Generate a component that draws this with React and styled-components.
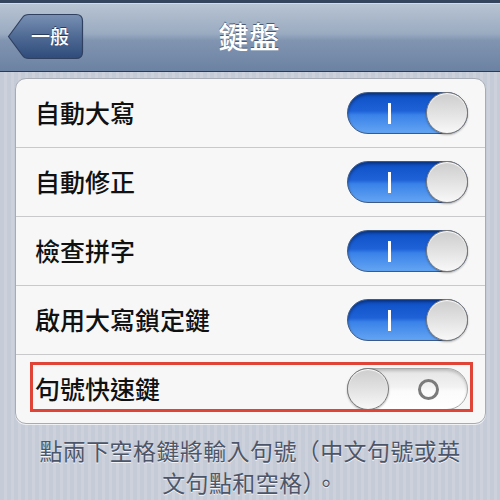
import React from "react";
import styled, { createGlobalStyle } from "styled-components";

const Global = createGlobalStyle`
  html, body { margin: 0; padding: 0; }
  body {
    width: 500px;
    height: 500px;
    overflow: hidden;
    font-family: "Noto Sans CJK TC", "Noto Sans", sans-serif;
    background-color: #c8cdd8;
    background-image: repeating-linear-gradient(90deg, #c5cbd7 0px, #c5cbd7 4px, #ccd1dc 4px, #ccd1dc 7px);
  }
`;

const Page = styled.div`
  width: 500px;
  height: 500px;
  display: flex;
  flex-direction: column;
`;

const NavBar = styled.header`
  box-sizing: border-box;
  height: 72px;
  border-top: 3px solid #34445f;
  border-bottom: 1px solid #2c3b54;
  background: linear-gradient(to bottom, #b9c4d3 0%, #9aabc1 45%, #8195b1 55%, #6c82a2 100%);
  box-shadow: inset 0 1px 0 #d3dbe5;
  display: grid;
  grid-template-columns: 1fr auto 1fr;
  align-items: center;
  padding: 0 8px 2px 7px;
`;

const BackButton = styled.button`
  justify-self: start;
  display: grid;
  width: 77px;
  height: 47px;
  padding: 0;
  border: 0;
  background: none;
  & > * { grid-area: 1 / 1; }
`;

const BackLabel = styled.span`
  align-self: center;
  justify-self: start;
  margin-left: 24px;
  margin-top: -2px;
  color: #fff;
  font-size: 19px;
  font-weight: 500;
  font-family: "Noto Sans CJK TC", sans-serif;
  text-shadow: 0 -1px 0 #2a3c5c;
`;

const Title = styled.h1`
  margin: 0 0 2px 0;
  color: #fff;
  font-size: 30px;
  font-weight: 500;
  letter-spacing: 1px;
  text-shadow: 0 -1px 0 #4a5a75;
`;

const Card = styled.section`
  margin: 6px 14px 0 15px;
  background: #f7f7f7;
  border: 1px solid #a7abb3;
  border-radius: 11px;
  box-shadow: 0 1px 0 rgba(255,255,255,0.7);
  display: flex;
  flex-direction: column;
  overflow: hidden;
`;

const Row = styled.div`
  position: relative;
  box-sizing: border-box;
  padding: 0 17px 0 19px;
  display: flex;
  align-items: center;
  justify-content: space-between;
  border-top: ${p => (p.$first ? "none" : "1px solid #c9c9cb")};
  height: ${p => (p.$first ? "68px" : "69px")};
`;

const Label = styled.span`
  font-size: 25px;
  font-weight: 500;
  line-height: 1;
  margin-top: -2px;
  color: #111;
`;

const Highlight = styled.div`
  position: absolute;
  left: 14px;
  right: 12px;
  top: 7px;
  height: 50px;
  box-sizing: border-box;
  border: 3px solid #df4437;
  pointer-events: none;
`;

const Track = styled.div`
  box-sizing: border-box;
  width: 121px;
  height: 42px;
  border-radius: 21px;
  display: flex;
  align-items: center;
  border: 1px solid ${p => (p.$on ? "#3d5a86" : "#a9a9a9")};
  background: ${p =>
    p.$on
      ? "linear-gradient(to bottom, #0d4ec4 0%, #1f62d8 45%, #3a82e8 55%, #63a4f2 100%)"
      : "linear-gradient(to bottom, #e4e4e4 0%, #f2f2f2 45%, #fbfbfb 55%, #ffffff 100%)"};
  box-shadow: inset 0 2px 3px rgba(0,0,0,${p => (p.$on ? 0.35 : 0.18)});
`;

const MarkArea = styled.div`
  flex: 1;
  display: flex;
  align-items: center;
  justify-content: center;
  padding-left: ${p => (p.$on ? "3px" : "0")};
`;

const OnMark = styled.div`
  width: 3px;
  height: 21px;
  background: #fff;
`;

const OffMark = styled.div`
  box-sizing: border-box;
  width: 21px;
  height: 21px;
  border-radius: 50%;
  border: 3px solid #7b7b7b;
  margin-left: 2px;
`;

const Knob = styled.div`
  box-sizing: border-box;
  width: 42px;
  height: 42px;
  margin: -1px;
  border-radius: 50%;
  border: 1px solid #7a7a7a;
  background: linear-gradient(to bottom, #cdcdcd 0%, #e2e2e2 50%, #f8f8f8 100%);
  box-shadow: inset 0 1px 1px #fff, 0 1px 2px rgba(0,0,0,0.3);
  flex: none;
`;

const Footer = styled.p`
  margin: 10px 0 0 0;
  padding: 0 30px;
  text-align: center;
  font-size: 23px;
  letter-spacing: 0.4px;
  line-height: 32px;
  color: #4d5669;
  text-shadow: 0 1px 0 rgba(255,255,255,0.8);
`;

function Toggle({ on }) {
  return (
    <Track $on={on}>
      {on ? (
        <>
          <MarkArea $on><OnMark /></MarkArea>
          <Knob />
        </>
      ) : (
        <>
          <Knob />
          <MarkArea><OffMark /></MarkArea>
        </>
      )}
    </Track>
  );
}

function BackShape() {
  return (
    <svg width="77" height="47" viewBox="0 0 77 47">
      <defs>
        <linearGradient id="bk" x1="0" y1="0" x2="0" y2="1">
          <stop offset="0" stopColor="#7990b3" />
          <stop offset="0.5" stopColor="#4f6a94" />
          <stop offset="1" stopColor="#2f4b7a" />
        </linearGradient>
      </defs>
      <path
        d="M1.5 23.5 L15.5 4.5 Q17.5 1.5 22 1.5 L69 1.5 Q75.5 1.5 75.5 8 L75.5 39 Q75.5 45.5 69 45.5 L22 45.5 Q17.5 45.5 15.5 42.5 Z"
        fill="url(#bk)"
        stroke="#2f4060"
        strokeWidth="1.2"
      />
    </svg>
  );
}

const items = [
  { label: "自動大寫", on: true },
  { label: "自動修正", on: true },
  { label: "檢查拼字", on: true },
  { label: "啟用大寫鎖定鍵", on: true },
  { label: "句號快速鍵", on: false, highlight: true },
];

export default function App() {
  return (
    <Page>
      <Global />
      <NavBar>
        <BackButton>
          <BackShape />
          <BackLabel>一般</BackLabel>
        </BackButton>
        <Title>鍵盤</Title>
        <span />
      </NavBar>
      <Card>
        {items.map((it, i) => (
          <Row key={it.label} $first={i === 0}>
            <Label>{it.label}</Label>
            <Toggle on={it.on} />
            {it.highlight && <Highlight />}
          </Row>
        ))}
      </Card>
      <Footer>點兩下空格鍵將輸入句號（中文句號或英文句點和空格）。</Footer>
    </Page>
  );
}
